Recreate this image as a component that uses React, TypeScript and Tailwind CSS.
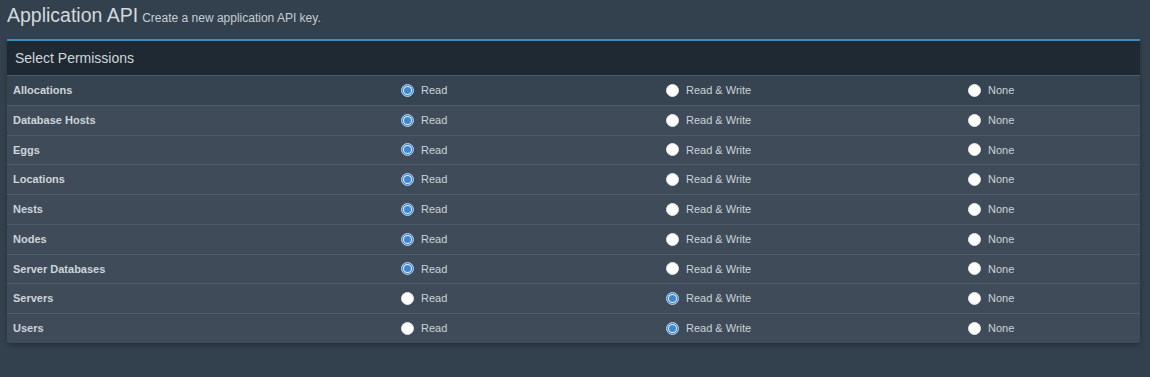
import { useState } from 'react';

type Perm = 'r' | 'rw' | 'n';

const resources: { name: string; value: Perm }[] = [
  { name: 'Allocations', value: 'r' },
  { name: 'Database Hosts', value: 'r' },
  { name: 'Eggs', value: 'r' },
  { name: 'Locations', value: 'r' },
  { name: 'Nests', value: 'r' },
  { name: 'Nodes', value: 'r' },
  { name: 'Server Databases', value: 'r' },
  { name: 'Servers', value: 'rw' },
  { name: 'Users', value: 'rw' },
];

const Radio = ({ checked, label, onClick }: { checked: boolean; label: string; onClick: () => void }) => {
  return (
    <label className="flex items-center gap-[7px] cursor-pointer select-none" onClick={onClick}>
      {checked ? (
        <span className="w-[13px] h-[13px] rounded-full bg-[#3f86cf] border border-[#b9d3ee] flex items-center justify-center">
          <span className="w-[9px] h-[9px] rounded-full bg-[#e8f1fb] flex items-center justify-center">
            <span className="w-[7px] h-[7px] rounded-full bg-[#3f86cf]" />
          </span>
        </span>
      ) : (
        <span className="w-[13px] h-[13px] rounded-full bg-white border border-[#e6e6e6]" />
      )}
      <span className="text-[11px] text-[#cbd3da]">{label}</span>
    </label>
  );
};

export default function App() {
  const [perms, setPerms] = useState(resources);

  const setPerm = (i: number, value: Perm) => {
    setPerms(perms.map((p, idx) => (idx === i ? { ...p, value } : p)));
  };

  return (
    <div className="min-h-[377px] bg-[#33404d] px-[7px] pt-[3px] font-['Liberation_Sans',Arial,sans-serif]">
      <div className="flex items-baseline h-[36px]">
        <h1 className="text-[19.5px] leading-[24px] text-[#d2d8de]">Application API</h1>
        <span className="ml-[4px] text-[12px] text-[#c5cdd5]">Create a new application API key.</span>
      </div>
      <div className="w-[1133px] border-t-2 border-[#3c8dbc] bg-[#3f4b58] rounded-b-[2px] shadow-[0_2px_4px_rgba(0,0,0,0.25)]">
        <div className="h-[34px] bg-[#1f2933] flex items-center px-[8px]">
          <span className="text-[14px] text-[#d0d6dc]">Select Permissions</span>
        </div>
        {perms.map((p, i) => (
          <div
            key={p.name}
            className={`grid grid-cols-[388px_265px_302px_1fr] items-center h-[29.75px] border-t border-[#4d5a67] ${
              i === 0 ? 'bg-[#364350]' : ''
            }`}
          >
            <div className="pl-[6px] text-[11px] font-bold text-[#cdd4db]">{p.name}</div>
            <div className="pl-[6px]">
              <Radio checked={p.value === 'r'} label="Read" onClick={() => setPerm(i, 'r')} />
            </div>
            <div className="pl-[6px]">
              <Radio checked={p.value === 'rw'} label="Read & Write" onClick={() => setPerm(i, 'rw')} />
            </div>
            <div className="pl-[6px]">
              <Radio checked={p.value === 'n'} label="None" onClick={() => setPerm(i, 'n')} />
            </div>
          </div>
        ))}
      </div>
    </div>
  );
}
